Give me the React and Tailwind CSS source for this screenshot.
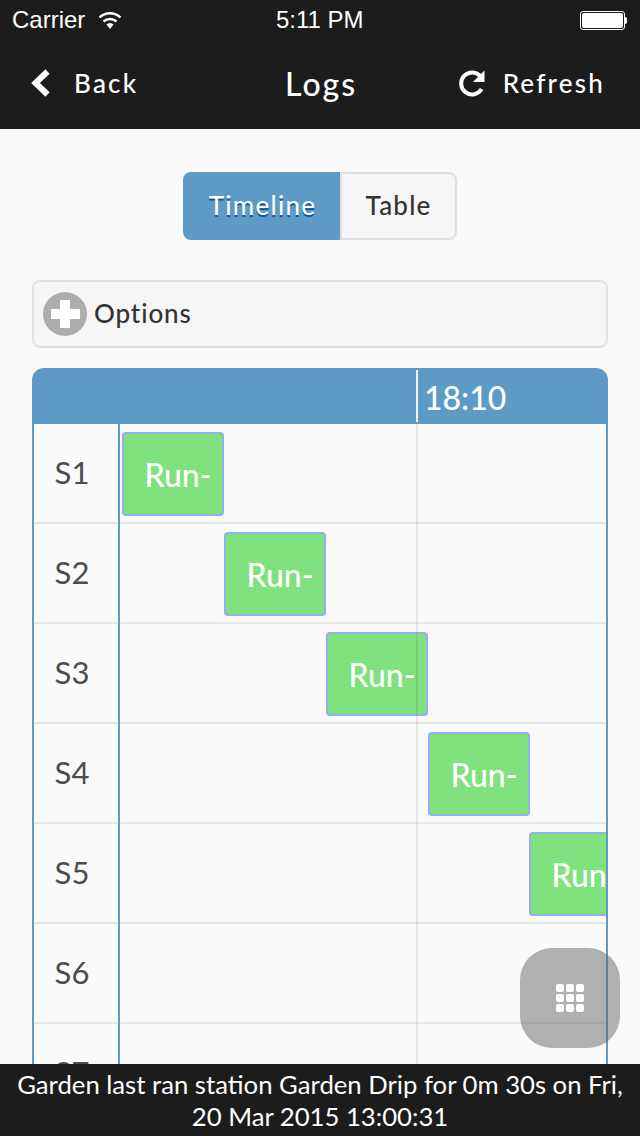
const rows = [
    { label: 'S1', offset: 2 },
    { label: 'S2', offset: 104 },
    { label: 'S3', offset: 206 },
    { label: 'S4', offset: 308 },
    { label: 'S5', offset: 409 },
    { label: 'S6' },
    { label: 'S7' },
];

const StatusBar = () => (
    <div className="relative flex h-10 items-center justify-between pl-3 pr-[13px] font-['Liberation_Sans',sans-serif] text-white">
        <div className="flex items-center gap-[13px] text-[24px]">
            <span>Carrier</span>
            <svg width="24" height="18" viewBox="0 0 24 18" fill="none" stroke="white" strokeWidth="2.4">
                <path d="M1.5 6.5a15 15 0 0 1 21 0" />
                <path d="M5.5 10.5a9.5 9.5 0 0 1 13 0" />
                <path d="M12 18l-3.6-4.4a5 5 0 0 1 7.2 0z" fill="white" stroke="none" />
            </svg>
        </div>
        <span className="absolute left-[276px] top-[7px] text-[24px] leading-[26px]">5:11 PM</span>
        <div className="flex items-center">
            <div className="h-[19px] w-[45px] rounded-[3px] border border-white p-[1px]">
                <div className="h-full w-full rounded-[2px] bg-white" />
            </div>
            <div className="h-[7px] w-[2px] rounded-r-sm bg-white" />
        </div>
    </div>
);

const NavBar = () => (
    <div className="relative flex h-[89px] items-center justify-between pb-[3px] pl-[29px] pr-[35px] text-white">
        <div className="flex items-center gap-[23px] text-[26px] font-medium tracking-[2.2px]">
            <svg width="22" height="28" viewBox="0 0 22 28" fill="none">
                <path d="M18.5 2.5L6.5 14l12 11.5" stroke="white" strokeWidth="6" />
            </svg>
            <span>Back</span>
        </div>
        <span className="absolute left-[285px] top-[24px] text-[32px] leading-[40px] font-medium tracking-[2px]">Logs</span>
        <div className="flex items-center gap-[16px] text-[26px] font-medium tracking-[2.2px]">
            <svg width="30" height="30" viewBox="0 0 30 30" fill="none">
                <path d="M24.6 21a11 11 0 1 1-.8-12.4" stroke="white" strokeWidth="4" />
                <path d="M27.5 2.5V14H16z" fill="white" />
            </svg>
            <span>Refresh</span>
        </div>
    </div>
);

const Row = ({ label, offset }) => (
    <div className="flex h-[100px] shrink-0 border-b-2 border-[#e6e6e6]">
        <div className="flex w-[84px] shrink-0 items-center justify-center pr-[8px] pb-[2px] text-[31px] text-[#4c4c4c]">
            {label}
        </div>
        <div className="relative flex-1 overflow-hidden pt-2 pl-[2px]">
            {offset !== undefined && (
                <div
                    className="relative z-10 flex h-[84px] w-[102px] items-center justify-center rounded border-2 border-[#91b0f0] bg-[#7fe27f] pt-[2px] pl-[10px] text-[32px] font-medium whitespace-nowrap text-white"
                    style={{ marginLeft: offset }}
                >
                    Run-
                </div>
            )}
        </div>
    </div>
);

export default function App() {
    return (
        <div className="relative flex h-[1136px] flex-col overflow-hidden bg-[#fafafa] font-['Lato',sans-serif]">
            <div className="shrink-0 bg-[#1c1c1c]">
                <StatusBar />
                <NavBar />
            </div>

            <div className="flex shrink-0 justify-center pt-[43px]">
                <div className="flex h-[68px] w-[157px] items-center justify-center rounded-l-lg bg-[#5e9ac6] pb-[2px] pl-[2px] text-[26px] font-medium tracking-[1.2px] text-white [text-shadow:0_2px_0_#0a5aa0]">
                    Timeline
                </div>
                <div className="flex h-[68px] w-[117px] items-center justify-center rounded-r-lg border-2 border-[#e0e0e0] bg-[#f6f6f6] pb-[2px] text-[26px] font-medium tracking-[1.2px] text-[#333]">
                    Table
                </div>
            </div>

            <div className="mx-8 mt-10 flex h-[68px] shrink-0 items-center gap-[7px] rounded-lg border-2 border-[#e0e0e0] bg-[#f6f6f6] pl-[9px] text-[26px] font-medium tracking-[0.9px] text-[#333]">
                <svg width="44" height="44" viewBox="0 0 44 44">
                    <circle cx="22" cy="22" r="22" fill="#adadad" />
                    <path d="M17 8h10v9h10v10H27v9H17v-9H8V17h9z" fill="white" />
                </svg>
                <span className="pb-[2px]">Options</span>
            </div>

            <div className="relative mx-8 mt-5 flex min-h-0 flex-1 flex-col">
                <div className="flex h-[56px] shrink-0 items-center rounded-t-[12px] bg-[#5e9ac6] pt-1 pl-[392px] text-[32px] font-medium text-white">
                    18:10
                </div>
                <div className="min-h-0 flex-1 border-x-2 border-[#5e9ac6]">
                    {rows.map((row) => (
                        <Row key={row.label} label={row.label} offset={row.offset} />
                    ))}
                </div>
                {/* lines that run across the rows */}
                <div className="absolute top-[56px] bottom-0 left-[86px] z-20 w-[2px] bg-[#5e9ac6]" />
                <div className="absolute top-[2px] left-[384px] h-[52px] w-[2px] bg-[#f2f2f2]" />
                <div className="absolute top-[56px] bottom-0 left-[384px] z-20 w-[2px] bg-black/[0.08]" />
            </div>

            <div className="absolute top-[948px] left-[520px] z-30 flex h-[100px] w-[100px] items-center justify-center rounded-[32px] bg-[#666]/50">
                <svg width="28" height="28" viewBox="0 0 28 28" fill="white">
                    {[0, 10, 20].map((y) =>
                        [0, 10, 20].map((x) => (
                            <rect key={`${x}-${y}`} x={x} y={y} width="8" height="8" rx="2" />
                        ))
                    )}
                </svg>
            </div>

            <div className="relative z-30 flex h-[72px] shrink-0 items-center justify-center bg-[#1c1c1c] px-2 text-center text-[25.7px] leading-8 text-white">
                <p>Garden last ran station Garden Drip for 0m 30s on Fri, 20 Mar 2015 13:00:31</p>
            </div>
        </div>
    );
}
